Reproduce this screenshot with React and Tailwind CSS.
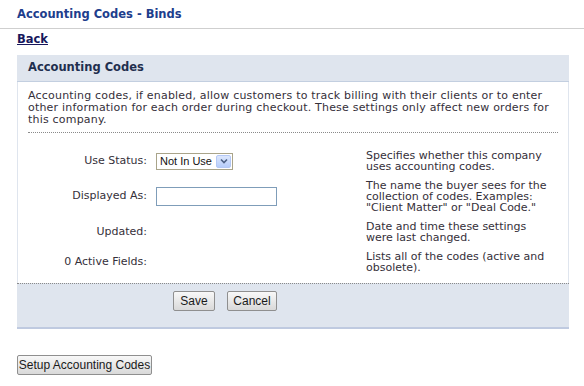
import React from 'react'

const verdana = { fontFamily: '"DejaVu Sans", Verdana, sans-serif' }

function XpButton({ children, className = '' }) {
  return (
    <button
      type="button"
      className={`h-[20px] border border-[#8f8f8f] rounded-[2px] bg-gradient-to-b from-[#f8f8f8] to-[#d9d9d9] text-[12px] text-[#1a1a1a] leading-none font-['Liberation_Sans',Tahoma,sans-serif] ${className}`}
    >
      {children}
    </button>
  )
}

function StatusSelect() {
  return (
    <div className="flex items-center h-[17px] w-[77px] border border-[#a9a48a] bg-white pl-[3px] pr-[1px]">
      <span className="flex-1 text-[11px] leading-none text-[#111] font-['Liberation_Sans',Tahoma,sans-serif] whitespace-nowrap">Not In Use</span>
      <span className="flex items-center justify-center w-[15px] h-[13px] rounded-[2px] border border-[#b4c8f5] bg-gradient-to-b from-[#dce7fd] to-[#b7cdfa]">
        <svg width="8" height="6" viewBox="0 0 8 6">
          <path d="M1 1.5 L4 4.5 L7 1.5" fill="none" stroke="#4d6185" strokeWidth="1.6" />
        </svg>
      </span>
    </div>
  )
}

const rows = [
  {
    label: 'Use Status:',
    control: <StatusSelect />,
    desc: 'Specifies whether this company uses accounting codes.',
  },
  {
    label: 'Displayed As:',
    control: <div className="h-[19px] w-[121px] border border-[#7f9db9] bg-white" />,
    desc: 'The name the buyer sees for the collection of codes. Examples: "Client Matter" or "Deal Code."',
  },
  {
    label: 'Updated:',
    control: null,
    desc: 'Date and time these settings were last changed.',
  },
  {
    label: '0 Active Fields:',
    control: null,
    desc: 'Lists all of the codes (active and obsolete).',
  },
]

export default function App() {
  return (
    <div className="w-[584px] h-[386px] bg-white overflow-hidden" style={verdana}>
      {/* page title */}
      <div className="pt-[7px] pl-[17px] pb-[6px] border-b border-[#cfcfcf]">
        <h1 className="text-[11.5px] leading-[15px] font-bold text-[#203d8c]">Accounting Codes - Binds</h1>
      </div>
      <div className="pl-[17px] pt-[2px] leading-[14px]">
        <a href="#" className="text-[11.5px] leading-[14px] font-bold text-[#17175c] underline">Back</a>
      </div>

      {/* panel */}
      <div className="ml-[17px] mt-[9px] w-[552px]">
        <div className="h-[27px] flex items-center pl-[11px] bg-[#dfe5ee] border-b border-[#c3cfe0]">
          <span className="text-[11.5px] font-bold text-[#1f2f4e]">Accounting Codes</span>
        </div>

        <div className="border-x border-[#dfe5ee] px-[10px]">
          <p className="pt-[8px] pb-[6px] text-[11px] leading-[12px] tracking-[0.2px] text-[#35303a] border-b border-dotted border-[#8a8a8a]">
            Accounting codes, if enabled, allow customers to track billing with their clients or to enter other information for each order during checkout. These settings only affect new orders for this company.
          </p>

          <div className="pt-[13px] pb-[6px]">
            {rows.map((r) => (
              <div key={r.label} className="flex items-center py-[4px]">
                <div className="w-[119px] text-right text-[11px] text-[#35303a]">{r.label}</div>
                <div className="w-[219px] pl-[9px]">{r.control}</div>
                <div className="w-[184px] text-[11px] leading-[11px] text-[#35303a]">{r.desc}</div>
              </div>
            ))}
          </div>
        </div>

        <div className="border-b-2 border-[#bfcae0]">
          <div className="h-[44px] bg-[#dfe5ee] border-t border-dotted border-[#8a8a8a] flex items-start pt-[7px] pl-[156px] gap-[12px]">
            <XpButton className="w-[42px]">Save</XpButton>
            <XpButton className="w-[50px]">Cancel</XpButton>
          </div>
        </div>
      </div>

      <div className="pl-[17px] pt-[23px]">
        <XpButton className="w-[135px]">Setup Accounting Codes</XpButton>
      </div>
    </div>
  )
}
